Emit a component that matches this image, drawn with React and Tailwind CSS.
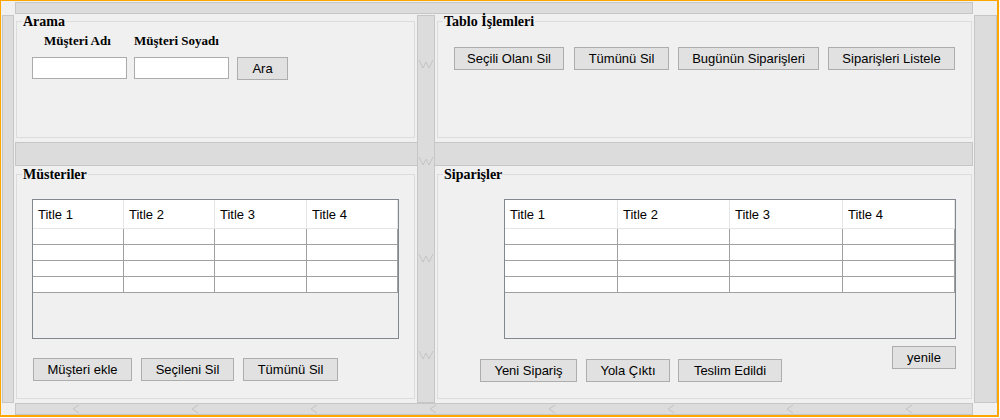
import React from "react";

const SANS = "font-['Liberation_Sans',Arial,sans-serif]";
const SERIF = "font-['Liberation_Serif','Times_New_Roman',serif]";

function Btn({ className, children }) {
  return (
    <div
      className={`h-[23px] shrink-0 flex items-center justify-center bg-[#e1e1e1] border border-[#adadad] text-[13px] text-black ${SANS} ${className}`}
    >
      {children}
    </div>
  );
}

function Group({ title, className, children }) {
  return (
    <div className={`relative border border-[#dcdcdc] ${className}`}>
      <span
        className={`absolute left-[5px] top-[-8px] px-[1px] bg-[#f0f0f0] leading-[16px] text-[14px] font-bold text-black ${SERIF}`}
      >
        {title}
      </span>
      {children}
    </div>
  );
}

function Table({ widths, className }) {
  return (
    <div
      className={`h-[140px] border border-[#828790] bg-[#f0f0f0] flex flex-col ${SANS} ${className}`}
    >
      <div className="flex h-[29px] bg-white border-b border-[#e5e5e5]">
        {widths.map((w, i) => (
          <div
            key={i}
            className={`${w} h-full border-r border-[#e5e5e5] pl-[5px] pt-[2px] flex items-center text-[13px] text-black`}
          >
            Title {i + 1}
          </div>
        ))}
      </div>
      {[0, 1, 2, 3].map((r) => (
        <div key={r} className="flex h-[16px] bg-white border-b border-[#a0a0a0]">
          {widths.map((w, i) => (
            <div key={i} className={`${w} h-full border-r border-[#a0a0a0]`} />
          ))}
        </div>
      ))}
    </div>
  );
}

function Zig() {
  return (
    <svg width="16" height="10" viewBox="0 0 16 10" className="block">
      <polyline
        points="1,1 5,9 8,3 11,9 15,1"
        fill="none"
        stroke="#c4c4c4"
        strokeWidth="1"
      />
    </svg>
  );
}

function Chev() {
  return (
    <svg width="10" height="10" viewBox="0 0 10 10" className="block shrink-0">
      <polyline points="8,1 2,5 8,9" fill="none" stroke="#c4c4c4" strokeWidth="1" />
    </svg>
  );
}

const bar = "bg-[#dcdcdc] border border-[#c6c6c6]";

export default function App() {
  return (
    <div className="w-[999px] h-[417px] border-l border-t border-r-2 border-b-2 border-[#ffa500] bg-[#f0f0f0] flex flex-col">
      <div className="h-[1px]" />
      <div className={`ml-[14px] w-[958px] h-[12px] ${bar}`} />
      <div className="h-[1px]" />
      <div className="flex h-[388px]">
        <div className={`ml-[1px] w-[12px] h-full ${bar}`} />
        <div className="w-[1px]" />
        <div className="w-[958px] h-full grid grid-cols-[402px_18px_538px] grid-rows-[127px_24px_237px]">
          {/* top-left */}
          <div className="col-start-1 row-start-1">
            <Group title="Arama" className="ml-[1px] mt-[6px] w-[399px] h-[117px]">
              <div className="flex flex-col pt-[11px]">
                <div className={`flex pl-[27px] h-[15px] leading-[15px] text-[13px] font-bold text-black ${SERIF}`}>
                  <div className="w-[90px]">Müşteri Adı</div>
                  <div>Müşteri Soyadı</div>
                </div>
                <div className="flex items-start mt-[9px] ml-[15px]">
                  <div className="w-[95px] h-[22px] bg-white border border-[#ababab]" />
                  <div className="ml-[7px] w-[95px] h-[22px] bg-white border border-[#ababab]" />
                  <Btn className="ml-[8px] w-[51px]">Ara</Btn>
                </div>
              </div>
            </Group>
          </div>
          {/* top-right */}
          <div className="col-start-3 row-start-1">
            <Group title="Tablo İşlemleri" className="ml-[2px] mt-[6px] w-[535px] h-[117px]">
              <div className="flex pt-[25px] pl-[16px]">
                <Btn className="w-[110px]">Seçili Olanı Sil</Btn>
                <Btn className="ml-[10px] w-[95px]">Tümünü Sil</Btn>
                <Btn className="ml-[9px] w-[141px]">Bugünün Siparişleri</Btn>
                <Btn className="ml-[9px] w-[127px]">Siparişleri Listele</Btn>
              </div>
            </Group>
          </div>
          {/* middle horizontal splitter */}
          <div className={`col-start-1 col-end-4 row-start-2 ${bar}`} />
          {/* bottom-left */}
          <div className="col-start-1 row-start-3">
            <Group title="Müsteriler" className="ml-[1px] mt-[8px] w-[399px] h-[225px]">
              <div className="flex flex-col pt-[24px]">
                <Table
                  className="ml-[15px] w-[367px]"
                  widths={["w-[91px]", "w-[91px]", "w-[92px]", "w-[91px]"]}
                />
                <div className="flex mt-[19px] ml-[16px]">
                  <Btn className="w-[99px]">Müşteri ekle</Btn>
                  <Btn className="ml-[9px] w-[93px]">Seçileni Sil</Btn>
                  <Btn className="ml-[9px] w-[95px]">Tümünü Sil</Btn>
                </div>
              </div>
            </Group>
          </div>
          {/* bottom-right */}
          <div className="col-start-3 row-start-3">
            <Group title="Siparişler" className="ml-[2px] mt-[8px] w-[535px] h-[225px]">
              <div className="flex flex-col pt-[24px]">
                <Table
                  className="ml-[66px] w-[452px]"
                  widths={["w-[113px]", "w-[112px]", "w-[113px]", "w-[112px]"]}
                />
                <div className="flex items-start ml-[42px]">
                  <div className="flex mt-[20px]">
                    <Btn className="w-[97px]">Yeni Sipariş</Btn>
                    <Btn className="ml-[9px] w-[84px]">Yola Çıktı</Btn>
                    <Btn className="ml-[8px] w-[104px]">Teslim Edildi</Btn>
                  </div>
                  <Btn className="mt-[7px] ml-[110px] w-[64px]">yenile</Btn>
                </div>
              </div>
            </Group>
          </div>
          {/* middle vertical splitter */}
          <div className={`col-start-2 row-start-1 row-end-4 flex flex-col items-center pt-[43px] gap-[87px] ${bar}`}>
            <Zig />
            <Zig />
            <Zig />
            <Zig />
          </div>
        </div>
        <div className="w-[1px]" />
        <div className={`w-[23px] h-full ${bar}`} />
      </div>
      <div className={`ml-[14px] w-[958px] h-[12px] flex items-center pl-[55px] gap-[109px] ${bar}`}>
        {[0, 1, 2, 3, 4, 5, 6, 7].map((i) => (
          <Chev key={i} />
        ))}
      </div>
    </div>
  );
}
